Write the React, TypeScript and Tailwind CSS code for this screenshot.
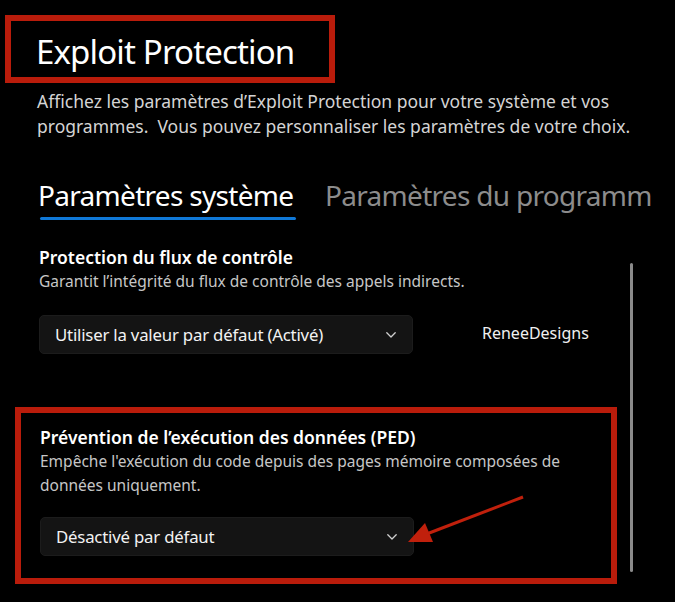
import React from "react";

function Chevron() {
  return (
    <svg width="10" height="6" viewBox="0 0 10 6" fill="none">
      <path d="M0.8 0.8 L5 5 L9.2 0.8" stroke="#d0d0d0" strokeWidth="1.3" strokeLinecap="round" strokeLinejoin="round" />
    </svg>
  );
}

function Dropdown({ label }: { label: string }) {
  return (
    <div className="flex h-[39px] w-[374px] items-center justify-between rounded-[5px] border border-[#1c1c1c] bg-[#141414] pl-[15px] pr-[16px]">
      <span className="text-[16.8px] text-[#f2f2f2] tracking-[-0.2px]">{label}</span>
      <Chevron />
    </div>
  );
}

export default function App() {
  return (
    <div
      className="relative h-[602px] w-[675px] overflow-hidden bg-black text-white"
      style={{ fontFamily: '"Noto Sans", "Open Sans", sans-serif' }}
    >
      <div className="ml-[5px] mt-[15px] flex h-[68px] w-[330px] items-start border-[6px] border-[#b91c0b] pl-[25px] pt-[11px]">
        <h1 className="text-[33px] leading-[40px] font-normal tracking-[-0.85px] text-white">Exploit Protection</h1>
      </div>

      <p className="ml-[37px] mt-[6px] text-[17.5px] leading-[25px] tracking-[0px] text-[#d4d4d4]">
        Affichez les paramètres d’Exploit Protection pour votre système et vos
        <br />
        programmes.&nbsp; Vous pouvez personnaliser les paramètres de votre choix.
      </p>

      <div className="ml-[38px] mt-[36px] flex w-[614px] gap-[29px] overflow-hidden whitespace-nowrap">
        <div className="flex flex-col">
          <span className="text-[28px] leading-[40px] tracking-[-0.7px] text-white">Paramètres système</span>
          <div className="ml-[2px] mt-[2px] h-[3px] w-[256px] rounded-full bg-[#0f78d7]" />
        </div>
        <span className="text-[28px] leading-[40px] tracking-[-0.7px] text-[#8c8c8c]">Paramètres du programme</span>
      </div>

      <div className="ml-[39px] mt-[25px]">
        <div className="text-[17.5px] leading-[24px] font-semibold tracking-[0px] text-white">Protection du flux de contrôle</div>
        <div className="text-[15.5px] leading-[24px] tracking-[0px] text-[#c6c6c6]">Garantit l’intégrité du flux de contrôle des appels indirects.</div>
        <div className="mt-[22px] flex items-center">
          <Dropdown label="Utiliser la valeur par défaut (Activé)" />
          <span className="ml-[69px] -mt-[4px] text-[16px] tracking-[0px] text-[#f0f0f0]">ReneeDesigns</span>
        </div>
      </div>

      <div className="ml-[15px] mt-[53px] h-[177px] w-[602px] border-[6px] border-[#b91c0b] pl-[19px] pt-[12px]">
        <div className="text-[17.5px] leading-[24px] font-semibold tracking-[0px] text-white">Prévention de l’exécution des données (PED)</div>
        <div className="text-[15.5px] leading-[24px] tracking-[0px] text-[#c6c6c6]">
          Empêche l'exécution du code depuis des pages mémoire composées de
          <br />
          données uniquement.
        </div>
        <div className="mt-[20px]">
          <Dropdown label="Désactivé par défaut" />
        </div>
      </div>

      <div className="absolute left-[630px] top-[263px] h-[309px] w-[3px] rounded-full bg-[#8a8a8a]" />

      <svg className="absolute left-0 top-0" width="675" height="602" viewBox="0 0 675 602">
        <line x1="523" y1="497" x2="424" y2="535" stroke="#c0200c" strokeWidth="3" />
        <polygon points="408,542 425,523 433,542" fill="#c0200c" />
      </svg>
    </div>
  );
}
